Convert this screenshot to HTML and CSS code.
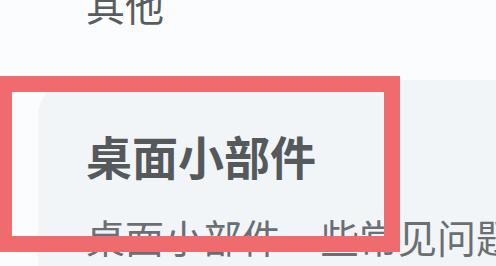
FILE: index.html
```html
<!DOCTYPE html>
<html lang="zh-CN">
<head>
<meta charset="utf-8">
<title>其他</title>
<link rel="stylesheet" href="styles.css">
</head>
<body>
<div class="page">
  <div class="section-title">其他</div>
  <div class="card">
    <div class="card-title">桌面小部件</div>
    <div class="card-desc">桌面小部件一些常见问题</div>
  </div>
  <div class="highlight"></div>
</div>
</body>
</html>
```

FILE: styles.css
```css
html, body {
  margin: 0;
  padding: 0;
}
body {
  background: #fbfcfd;
  font-family: "Noto Sans CJK SC", "Noto Sans", sans-serif;
  overflow: hidden;
  width: 496px;
  height: 266px;
}
.page {
  position: relative;
  width: 496px;
  height: 266px;
  overflow: hidden;
}
.section-title {
  margin: -15px 0 0 0;
  padding-left: 86px;
  font-size: 39px;
  line-height: 39px;
  color: #5a5d60;
}
.card {
  margin: 56px 0 0 38px;
  background: #f2f5f8;
  border-radius: 36px 0 0 36px;
  padding: 52px 0 40px 48px;
  white-space: nowrap;
}
.card-title {
  font-size: 46px;
  line-height: 46px;
  font-weight: 700;
  color: #55595c;
}
.card-desc {
  margin-top: 39px;
  font-size: 39px;
  line-height: 39px;
  color: #6b6f73;
}
.highlight {
  position: absolute;
  left: -4px;
  top: 76px;
  width: 372px;
  height: 144px;
  border: 16px solid #ef6b6e;
}
```
